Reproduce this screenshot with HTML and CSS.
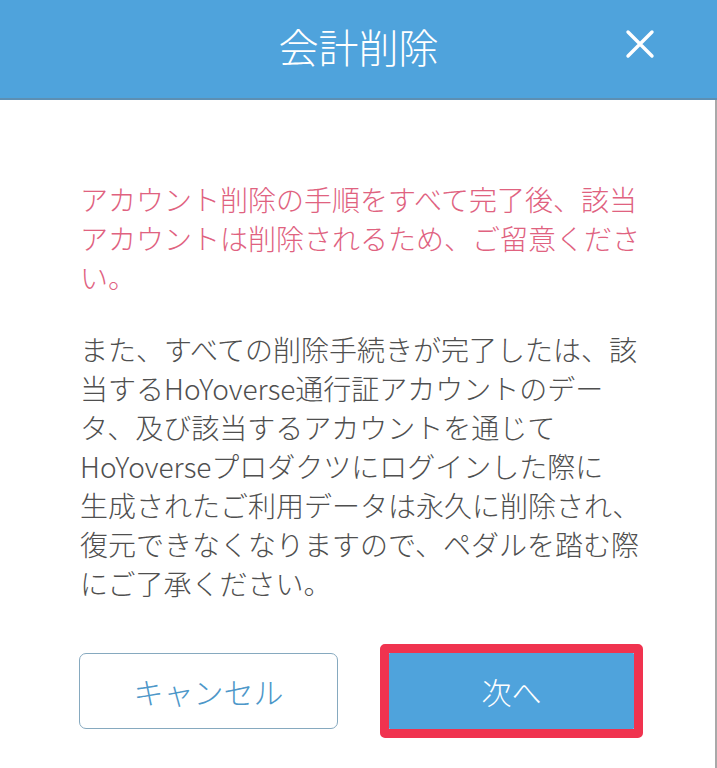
FILE: index.html
```html
<!DOCTYPE html>
<html lang="ja">
<head>
<meta charset="utf-8">
<title>会計削除</title>
<link rel="stylesheet" href="styles.css">
</head>
<body>
<div class="dialog">
  <header class="head">
    <span class="spacer"></span>
    <h1 class="title">会計削除</h1>
    <button class="close" aria-label="閉じる">
      <svg width="30" height="30" viewBox="0 0 30 30"><path d="M3 3 L27 27 M27 3 L3 27" stroke="#fff" stroke-width="3.4" stroke-linecap="round" fill="none"/></svg>
    </button>
  </header>
  <main class="body">
    <p class="warn">アカウント削除の手順をすべて完了後、該当<br>アカウントは削除されるため、ご留意くださ<br>い。</p>
    <p class="desc">また、すべての削除手続きが完了したは、該<br>当するHoYoverse通行証アカウントのデー<br>タ、及び該当するアカウントを通じて<br>HoYoverseプロダクツにログインした際に<br>生成されたご利用データは永久に削除され、<br>復元できなくなりますので、ペダルを踏む際<br>にご了承ください。</p>
    <div class="actions">
      <button class="btn cancel">キャンセル</button>
      <span class="mark"><button class="btn next">次へ</button></span>
    </div>
  </main>
</div>
</body>
</html>
```
FILE: styles.css
```css
html, body {
  margin: 0;
  padding: 0;
  background: #fff;
}
body {
  font-family: "Noto Sans CJK JP", "Noto Sans", sans-serif;
  width: 717px;
  height: 768px;
  overflow: hidden;
}
.dialog {
  display: flex;
  flex-direction: column;
  height: 768px;
}
.head {
  height: 100px;
  box-sizing: border-box;
  background: #4fa3dc;
  border-bottom: 2px solid #5d8fb3;
  display: grid;
  grid-template-columns: 1fr auto 1fr;
  align-items: center;
  padding-bottom: 6px;
}
.title {
  margin: 0;
  color: #fff;
  font-size: 40px;
  font-weight: 300;
  line-height: 1;
  letter-spacing: 0;
}
.close {
  justify-self: end;
  margin-right: 62px;
  background: none;
  border: 0;
  padding: 0;
  width: 30px;
  height: 30px;
  display: flex;
  margin-top: -4px;
}
.body {
  flex: 1;
  border-right: 2px solid #a9a9a9;
  padding: 80px 0 0 80px;
}
.warn, .desc {
  margin: 0;
  font-size: 28px;
  font-weight: 300;
  line-height: 39px;
  white-space: nowrap;
}
.warn {
  color: #e0627f;
}
.desc {
  color: #4f4f4f;
  margin-top: 33px;
}
.actions {
  display: flex;
  align-items: center;
  gap: 42px;
  margin-top: 41px;
  margin-left: -1px;
}
.btn {
  font-family: inherit;
  font-size: 30px;
  font-weight: 300;
  height: 76px;
  box-sizing: border-box;
  padding: 0;
}
.cancel {
  width: 259px;
  background: #fff;
  border: 1.5px solid #86a9bf;
  border-radius: 7px;
  color: #4d97c9;
}
.mark {
  display: flex;
  border: 9px solid #f0334f;
  border-radius: 5px;
}
.next {
  width: 245px;
  background: #4fa3dc;
  border: 0;
  border-radius: 1px;
  color: #fff;
}
```
